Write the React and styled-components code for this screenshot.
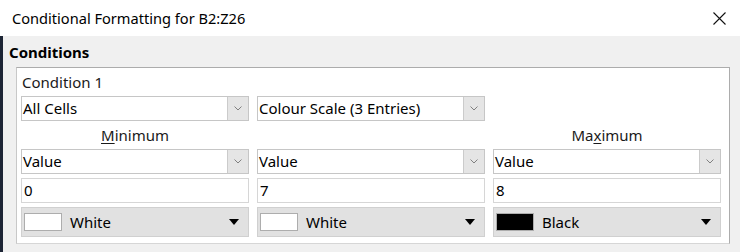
import React from "react";
import styled, { createGlobalStyle } from "styled-components";

const GlobalStyle = createGlobalStyle`
  html, body {
    margin: 0;
    padding: 0;
    background: #f0f0f0;
  }
  body {
    font-family: "Noto Sans", "Open Sans", sans-serif;
    font-size: 15px;
    color: #000;
  }
`;

const Dialog = styled.div`
  width: 740px;
  height: 252px;
  overflow: hidden;
  display: flex;
  flex-direction: column;
  background: #f0f0f0;
`;

const TitleBar = styled.div`
  height: 36px;
  flex: none;
  display: flex;
  align-items: center;
  justify-content: space-between;
  padding: 0 14px 0 12px;
  background: #fff;
`;

const Title = styled.span`
  font-size: 14.6px;
  color: #000;
`;

const CloseButton = styled.div`
  width: 14px;
  height: 14px;
  display: flex;
  align-items: center;
  justify-content: center;
`;

const Body = styled.div`
  flex: 1;
  border-left: 3px solid #1d2535;
  padding: 6px 0 0 6px;
`;

const Heading = styled.div`
  font-weight: 700;
  font-size: 15px;
  line-height: 20px;
  height: 20px;
  margin-bottom: 5px;
`;

const Frame = styled.div`
  margin-left: 7px;
  width: 708px;
  background: #fff;
  border: 1px solid #acacac;
  border-bottom-color: #d6d6d6;
  border-left-color: #c8c8c8;
  padding: 4px 0 6px 4px;
`;

const CondLabel = styled.div`
  line-height: 20px;
  height: 20px;
  padding-left: 1px;
  margin-bottom: 4px;
  color: #1a1a1a;
`;

const Grid = styled.div`
  display: grid;
  grid-template-columns: repeat(3, 228px);
  column-gap: 8px;
  row-gap: 4px;
`;

const ColHead = styled.div`
  text-align: center;
  line-height: 20px;
  height: 20px;
  margin: 4px 0;
  color: #1a1a1a;
`;

const U = styled.span`
  text-decoration: underline;
  text-underline-offset: 2px;
`;

const Combo = styled.div`
  height: 25px;
  box-sizing: border-box;
  display: flex;
  border: 1px solid #c6c6c6;
  background: #fff;
`;

const ComboText = styled.div`
  flex: 1;
  line-height: 23px;
  padding-left: 1px;
  white-space: nowrap;
  overflow: hidden;
`;

const ComboButton = styled.div`
  width: 20px;
  flex: none;
  background: #e5e5e5;
  border-left: 1px solid #cbcbcb;
  display: flex;
  align-items: center;
  justify-content: center;
`;

const Input = styled.div`
  height: 25px;
  box-sizing: border-box;
  border: 1px solid #d6d6d6;
  background: #fff;
  line-height: 23px;
  padding-left: 2px;
`;

const ColorButton = styled.div`
  height: 30px;
  box-sizing: border-box;
  border: 1px solid #d0d0d0;
  background: #e1e1e1;
  display: flex;
  align-items: center;
  padding: 0 9px 0 2px;
`;

const Swatch = styled.div`
  width: 38px;
  height: 18px;
  box-sizing: border-box;
  border: 1px solid #adadad;
  background: ${(p) => p.$color};
  margin-right: 8px;
`;

const ColorName = styled.span`
  flex: 1;
`;

const Chevron = () => (
  <svg width="8" height="5" viewBox="0 0 8 5">
    <path d="M0.5 0.5 L4 4 L7.5 0.5" fill="none" stroke="#808080" strokeWidth="1" />
  </svg>
);

const Triangle = () => (
  <svg width="10" height="6" viewBox="0 0 10 6">
    <path d="M0 0 H10 L5 6 Z" fill="#000" />
  </svg>
);

const Select = ({ value }) => (
  <Combo>
    <ComboText>{value}</ComboText>
    <ComboButton>
      <Chevron />
    </ComboButton>
  </Combo>
);

const ColorPick = ({ color, name }) => (
  <ColorButton>
    <Swatch $color={color} />
    <ColorName>{name}</ColorName>
    <Triangle />
  </ColorButton>
);

export default function App() {
  return (
    <>
      <GlobalStyle />
      <Dialog>
        <TitleBar>
          <Title>Conditional Formatting for B2:Z26</Title>
          <CloseButton>
            <svg width="13" height="13" viewBox="0 0 13 13">
              <path d="M0.5 0.5 L12.5 12.5 M12.5 0.5 L0.5 12.5" stroke="#111" strokeWidth="1.1" />
            </svg>
          </CloseButton>
        </TitleBar>
        <Body>
          <Heading>Conditions</Heading>
          <Frame>
            <CondLabel>Condition 1</CondLabel>
            <Grid>
              <Select value="All Cells" />
              <Select value="Colour Scale (3 Entries)" />
              <div />
            </Grid>
            <Grid>
              <ColHead>
                <U>M</U>inimum
              </ColHead>
              <div />
              <ColHead>
                Ma<U>x</U>imum
              </ColHead>
            </Grid>
            <Grid>
              <Select value="Value" />
              <Select value="Value" />
              <Select value="Value" />
              <Input>0</Input>
              <Input>7</Input>
              <Input>8</Input>
              <ColorPick color="#fff" name="White" />
              <ColorPick color="#fff" name="White" />
              <ColorPick color="#000" name="Black" />
            </Grid>
          </Frame>
        </Body>
      </Dialog>
    </>
  );
}
